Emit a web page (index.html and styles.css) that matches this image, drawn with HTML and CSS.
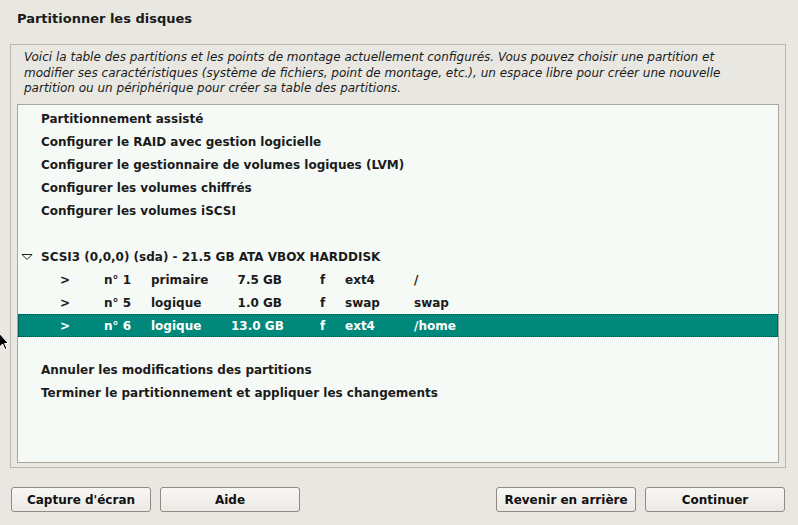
FILE: index.html
```html
<!DOCTYPE html>
<html lang="fr">
<head>
<meta charset="utf-8">
<title>Partitionner les disques</title>
<link rel="stylesheet" href="styles.css">
</head>
<body>
<div class="page">
  <h1 class="title">Partitionner les disques</h1>
  <div class="frame">
    <p class="desc">Voici la table des partitions et les points de montage actuellement configurés. Vous pouvez choisir une partition et modifier ses caractéristiques (système de fichiers, point de montage, etc.), un espace libre pour créer une nouvelle partition ou un périphérique pour créer sa table des partitions.</p>
    <div class="list">
      <div class="row item">Partitionnement assisté</div>
      <div class="row item">Configurer le RAID avec gestion logicielle</div>
      <div class="row item">Configurer le gestionnaire de volumes logiques (LVM)</div>
      <div class="row item">Configurer les volumes chiffrés</div>
      <div class="row item">Configurer les volumes iSCSI</div>
      <div class="row"></div>
      <div class="row disk">
        <svg class="tri" width="12" height="8" viewBox="0 0 12 8"><path d="M1 1.5 H11 L6 6.5 Z" fill="none" stroke="#222" stroke-width="1"/></svg>
        <span>SCSI3 (0,0,0) (sda) - 21.5 GB ATA VBOX HARDDISK</span>
      </div>
      <div class="row part">
        <span class="c-arrow">&gt;</span><span class="c-num">n° 1</span><span class="c-type">primaire</span><span class="c-size">7.5 GB</span><span class="c-f">f</span><span class="c-fs">ext4</span><span class="c-mnt">/</span>
      </div>
      <div class="row part">
        <span class="c-arrow">&gt;</span><span class="c-num">n° 5</span><span class="c-type">logique</span><span class="c-size">1.0 GB</span><span class="c-f">f</span><span class="c-fs">swap</span><span class="c-mnt">swap</span>
      </div>
      <div class="row part selected">
        <span class="c-arrow">&gt;</span><span class="c-num">n° 6</span><span class="c-type">logique</span><span class="c-size">13.0 GB</span><span class="c-f">f</span><span class="c-fs">ext4</span><span class="c-mnt">/home</span>
      </div>
      <div class="row short"></div>
      <div class="row item">Annuler les modifications des partitions</div>
      <div class="row item">Terminer le partitionnement et appliquer les changements</div>
    </div>
  </div>
  <div class="buttons">
    <div class="group">
      <button class="btn">Capture d'écran</button>
      <button class="btn">Aide</button>
    </div>
    <div class="group">
      <button class="btn">Revenir en arrière</button>
      <button class="btn">Continuer</button>
    </div>
  </div>
  <svg class="cursor" width="10" height="18" viewBox="0 0 10 18"><path d="M0.5 0.5 L0.5 14 L3.5 11 L6 16.5 L8 15.5 L5.5 10.5 L9.5 10.5 Z" fill="#000" stroke="#fff" stroke-width="1"/></svg>
</div>
</body>
</html>
```
FILE: styles.css
```css
* { box-sizing: border-box; }
html, body {
  margin: 0;
  padding: 0;
  background: #e8e7e1;
}
body {
  font-family: "DejaVu Sans", "Liberation Sans", sans-serif;
  color: #1b1b1b;
  width: 798px;
  height: 525px;
  overflow: hidden;
}
.page {
  position: relative;
  width: 798px;
  height: 525px;
  padding: 0 13px 0 10px;
}
.title {
  margin: 0;
  font-size: 13px;
  font-weight: bold;
  line-height: 16px;
  padding: 11px 0 0 7px;
  height: 44px;
}
.frame {
  border: 1px solid #bdb8ab;
  width: 776px;
  height: 424px;
  padding: 0 6px 4px 6px;
  display: flex;
  flex-direction: column;
}
.desc {
  margin: 0;
  padding: 5px 0 0 7px;
  width: 712px;
  font-style: italic;
  font-size: 12px;
  line-height: 15.5px;
  height: 59px;
}
.list {
  flex: 1;
  background: #f5faf7;
  border: 1px solid #a9a69c;
  padding-top: 2px;
}
.row {
  height: 23px;
  display: flex;
  align-items: center;
  font-size: 12px;
  font-weight: bold;
  white-space: pre;
}
.row.short { height: 21px; }
.item { padding-left: 23px; }
.disk { padding-left: 3px; }
.disk .tri { margin-right: 8px; }
.part span { display: block; }
.c-arrow { width: 86px; padding-left: 42px; }
.c-num { width: 47px; }
.c-type { width: 80px; }
.c-size { width: 51px; text-align: right; }
.c-f { width: 63px; padding-left: 38px; }
.c-fs { width: 69px; }
.selected {
  background: #00897b;
  color: #ffffff;
  outline: 1px dotted #0b3f39;
  outline-offset: -1px;
}
.buttons {
  display: flex;
  justify-content: space-between;
  padding-top: 19px;
  padding-left: 1px;
}
.group {
  display: flex;
  gap: 9px;
}
.btn {
  width: 140px;
  height: 25px;
  border: 1px solid #8e8b82;
  border-radius: 3px;
  background: linear-gradient(#f8f7f4, #ebe9e4);
  font-family: "DejaVu Sans", "Liberation Sans", sans-serif;
  font-size: 12px;
  font-weight: bold;
  color: #111;
  padding: 0;
}
.cursor {
  position: absolute;
  left: -1px;
  top: 333px;
}
```
